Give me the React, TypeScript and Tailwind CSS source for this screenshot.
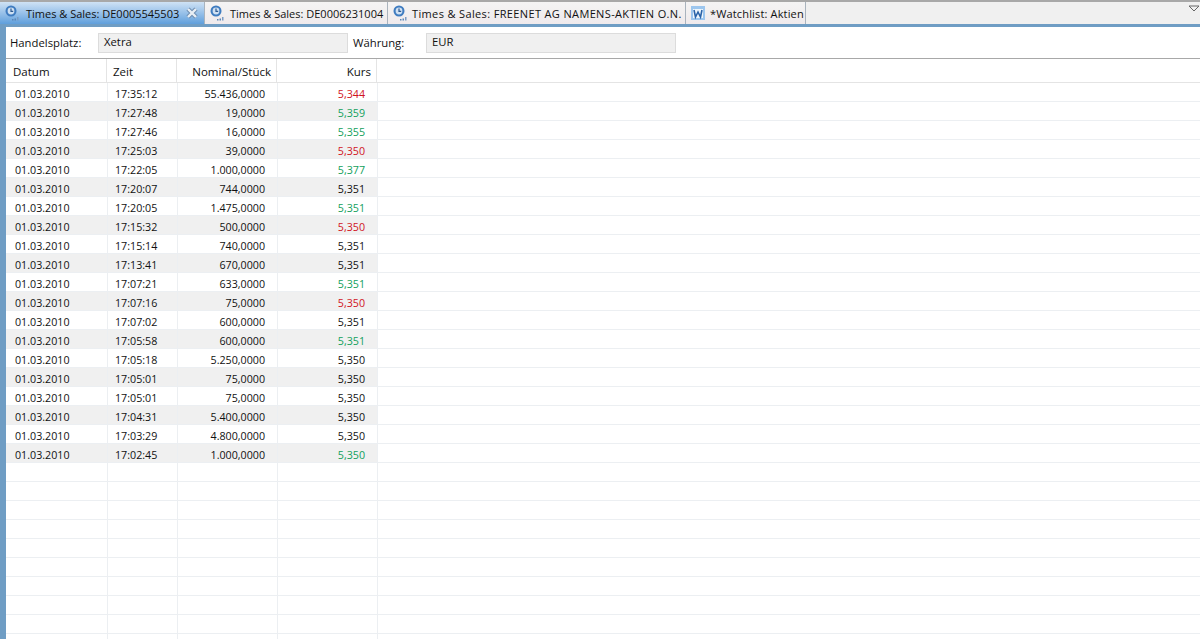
import React from "react";

const F = "[font-family:'Open_Sans','Noto_Sans',sans-serif]";

type Row = [string, string, string, "r" | "g" | "k"];

const rows: Row[] = [
  ["17:35:12", "55.436,0000", "5,344", "r"],
  ["17:27:48", "19,0000", "5,359", "g"],
  ["17:27:46", "16,0000", "5,355", "g"],
  ["17:25:03", "39,0000", "5,350", "r"],
  ["17:22:05", "1.000,0000", "5,377", "g"],
  ["17:20:07", "744,0000", "5,351", "k"],
  ["17:20:05", "1.475,0000", "5,351", "g"],
  ["17:15:32", "500,0000", "5,350", "r"],
  ["17:15:14", "740,0000", "5,351", "k"],
  ["17:13:41", "670,0000", "5,351", "k"],
  ["17:07:21", "633,0000", "5,351", "g"],
  ["17:07:16", "75,0000", "5,350", "r"],
  ["17:07:02", "600,0000", "5,351", "k"],
  ["17:05:58", "600,0000", "5,351", "g"],
  ["17:05:18", "5.250,0000", "5,350", "k"],
  ["17:05:01", "75,0000", "5,350", "k"],
  ["17:05:01", "75,0000", "5,350", "k"],
  ["17:04:31", "5.400,0000", "5,350", "k"],
  ["17:03:29", "4.800,0000", "5,350", "k"],
  ["17:02:45", "1.000,0000", "5,350", "g"],
];

const ClockIcon = () => (
  <svg width="18" height="18" viewBox="0 0 18 18" className="shrink-0">
    <circle cx="7" cy="7" r="5.5" fill="#3f7cc0" />
    <circle cx="7" cy="7" r="3.4" fill="#cfe0f2" />
    <path d="M7 4.6V7.4H9.2" stroke="#2e5b92" strokeWidth="1.2" fill="none" />
    <rect x="8" y="15" width="1.5" height="1.5" fill="#5a86b8" />
    <rect x="10.5" y="14.5" width="1.5" height="2" fill="#5a86b8" />
    <rect x="13" y="13" width="1.5" height="3.5" fill="#7a9cc4" />
  </svg>
);

const WatchIcon = () => (
  <svg width="16" height="16" viewBox="0 0 16 16" className="shrink-0">
    <rect x="1" y="1" width="14" height="14" fill="#9cc6ee" />
    <rect x="3" y="4" width="10" height="9" fill="#eef6fc" />
    <path d="M4 5L5.5 12L8 7L10.5 12L12 5" stroke="#2a63a8" strokeWidth="1.6" fill="none" />
  </svg>
);

const CloseIcon = () => (
  <svg width="14" height="14" viewBox="0 0 14 14" className="ml-[6px] shrink-0">
    <path d="M3 3L11 11M11 3L3 11" stroke="#6f8eb0" strokeWidth="4.4" />
    <path d="M3 3L11 11M11 3L3 11" stroke="#e9eff5" strokeWidth="2.4" />
  </svg>
);

const Tab = ({
  label,
  width,
  icon,
  active,
  text,
}: {
  label: string;
  width: string;
  icon: React.ReactNode;
  active?: boolean;
  text?: string;
}) => (
  <div
    className={`${width} flex h-full shrink-0 items-center border-r border-[#a9b3bd] pl-[4px] text-[#111] ${
      active ? "bg-gradient-to-b from-[#cfe2f4] to-[#5f9fdc]" : "bg-gradient-to-b from-[#f4f4f4] to-[#efeaec]"
    }`}
  >
    {icon}
    <span className={`whitespace-nowrap leading-none ${text ?? "ml-[4px]"}`}>{label}</span>
    {active && <CloseIcon />}
  </div>
);

const Cell = ({
  width,
  right,
  color,
  pad,
  children,
}: {
  width: string;
  right?: boolean;
  color?: string;
  pad?: string;
  children?: React.ReactNode;
}) => (
  <div
    className={`${width} flex h-full shrink-0 items-center border-r border-[#eceff2] pt-[5px] leading-none ${
      right ? "justify-end pr-[12px]" : pad ?? "pl-[9px]"
    } ${color ?? ""}`}
  >
    {children}
  </div>
);

const colorClass = { r: "text-[#d0141e]", g: "text-[#12a05c]", k: "text-[#111]" };

export default function App() {
  return (
    <div className={`${F} flex h-[639px] w-[1200px] flex-col overflow-hidden bg-white text-[11px] text-[#111]`}>
      <div className="relative flex h-[27px] shrink-0 flex-col">
        <div className="flex h-[24px] border-t-2 border-[#a8a8a8] bg-[#f0f0f0]">
          <Tab width="w-[205px]" label="Times & Sales: DE0005545503" icon={<ClockIcon />} active />
          <Tab width="w-[183px]" label="Times & Sales: DE0006231004" text="ml-[3px]" icon={<ClockIcon />} />
          <Tab
            width="w-[298px]"
            label="Times & Sales: FREENET AG NAMENS-AKTIEN O.N."
            text="ml-[2px] tracking-[0.36px]"
            icon={<ClockIcon />}
          />
          <Tab width="w-[120px]" label="*Watchlist: Aktien" text="ml-[4px] tracking-[0.15px]" icon={<WatchIcon />} />
          <div className="relative flex-1">
            <svg width="12" height="8" viewBox="0 0 12 8" className="absolute right-0 top-[3px]">
              <path d="M1 1H11L6 6Z" fill="none" stroke="#666" />
            </svg>
          </div>
        </div>
        <div className="h-[3px] bg-[#6f9dc4]" />
      </div>
      <div className="flex min-h-0 flex-1">
        <div className="w-[6px] shrink-0 bg-[#6f9dc4]" />
        <div className="min-w-0 flex-1">
          <div className="flex h-[31px] items-center pl-[4px] text-[11.3px]">
            <span className="w-[88px] pt-[1px]">Handelsplatz:</span>
            <div className="flex h-[20px] w-[250px] items-center border border-[#dcdcdc] bg-[#f0f0f0] pl-[5px]">Xetra</div>
            <span className="ml-[5px] w-[73px] pt-[1px]">Währung:</span>
            <div className="flex h-[20px] w-[250px] items-center border border-[#dcdcdc] bg-[#f0f0f0] pl-[5px]">EUR</div>
          </div>
          <div className="flex h-[25px] border-y border-t-[#a8a8a8] border-b-[#e4e4e4] bg-white text-[11.5px] leading-none">
            <div className="flex w-[101px] items-center border-r border-[#e4e4e4] pl-[7px] pt-[3px]">Datum</div>
            <div className="flex w-[70px] items-center border-r border-[#e4e4e4] pl-[6px] pt-[3px]">Zeit</div>
            <div className="flex w-[100px] items-center justify-end border-r border-[#e4e4e4] pr-[5px] pt-[3px]">Nominal/Stück</div>
            <div className="flex w-[100px] items-center justify-end border-r border-[#e4e4e4] pr-[5px] pt-[3px]">Kurs</div>
          </div>
          {rows.map((row, i) => (
            <div key={i} className="flex h-[19px] border-b border-[#eceff2] text-[10.7px]">
              <div className={`flex h-full w-[372px] ${i % 2 === 1 ? "bg-[#f0f0f0]" : ""}`}>
                <Cell width="w-[102px]">01.03.2010</Cell>
                <Cell width="w-[70px]" pad="pl-[7px]">
                  {row[0]}
                </Cell>
                <Cell width="w-[100px]" right>
                  {row[1]}
                </Cell>
                <Cell width="w-[100px]" right color={colorClass[row[3]]}>
                  {row[2]}
                </Cell>
              </div>
            </div>
          ))}
          {Array.from({ length: 10 }).map((_, i) => (
            <div key={i} className="flex h-[19px] border-b border-[#eceff2]">
              <Cell width="w-[102px]" />
              <Cell width="w-[70px]" />
              <Cell width="w-[100px]" />
              <Cell width="w-[100px]" />
            </div>
          ))}
        </div>
      </div>
    </div>
  );
}
